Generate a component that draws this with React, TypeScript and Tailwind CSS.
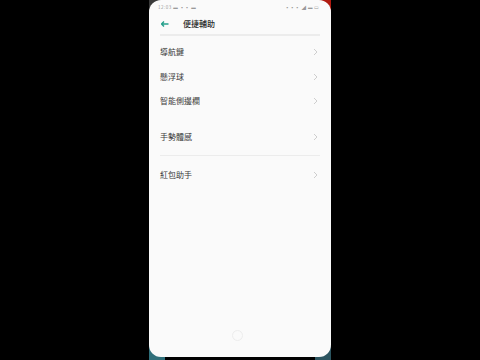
import React from 'react';

const font = { fontFamily: '"Noto Sans CJK TC", "Noto Sans CJK SC", sans-serif' };

function Chevron() {
  return (
    <svg width="5" height="8" viewBox="0 0 5 8" className="shrink-0">
      <path d="M1 1 L4 4 L1 7" fill="none" stroke="#c8c8c8" strokeWidth="0.9" />
    </svg>
  );
}

function Row({ label }: { label: string }) {
  return (
    <div className="h-[24.5px] flex items-center justify-between pl-[11px] pr-[13px]">
      <span className="text-[8px] leading-none text-[#3a3a3a]">{label}</span>
      <Chevron />
    </div>
  );
}

export default function App() {
  return (
    <div className="w-[480px] h-[360px] bg-black flex justify-center overflow-hidden" style={font}>
      <div className="relative w-[182px] h-[360px]">
        {/* wallpaper peeking behind the rounded corners */}
        <div className="absolute left-0 top-0 w-[14px] h-[14px] bg-[#3a3a3a]" />
        <div className="absolute right-0 top-0 w-[14px] h-[16px] bg-[#b01a10]" />
        <div className="absolute left-0 bottom-0 w-[16px] h-[14px] bg-[#2f6f7a]" />
        <div className="absolute right-0 bottom-0 w-[16px] h-[14px] bg-[#2c5560]" />

        <div className="relative h-[357px] bg-[#fafafa] rounded-[12px] flex flex-col">
          {/* status bar */}
          <div className="h-[13px] flex items-center justify-between px-[9px] pt-[1px]">
            <span className="text-[4.5px] leading-none text-[#9a9a9a] tracking-[0.5px]">12:03 ▬ ▪▪ ▬</span>
            <span className="text-[4.5px] leading-none text-[#9a9a9a] tracking-[0.5px] mr-[2px]">▪▪▪ ◢ ▬ ▭</span>
          </div>

          {/* header */}
          <div className="h-[21px] flex items-center pl-[12px]">
            <svg width="8" height="6" viewBox="0 0 8 6">
              <path d="M0.5 3 L7.5 3 M3 0.6 L0.6 3 L3 5.4" fill="none" stroke="#26a08c" strokeWidth="1.4" />
            </svg>
            <span className="ml-[14px] text-[8px] leading-none text-[#2a2a2a] font-medium">便捷輔助</span>
          </div>
          <div className="mx-[11px] h-[2px] bg-[#ececec]" />

          <div className="pt-[4px]">
            <Row label="導航鍵" />
            <Row label="懸浮球" />
            <Row label="智能側邊欄" />
          </div>
          <div className="mt-[11px]">
            <Row label="手勢體感" />
          </div>
          <div className="mt-[6px] mx-[11px] h-[1px] bg-[#ececec]" />
          <div className="mt-[7px]">
            <Row label="紅包助手" />
          </div>

          <div className="flex-1" />
          <div className="flex justify-center pb-[16px] pr-[6px]">
            <div className="w-[11px] h-[11px] rounded-full border-[1.5px] border-[#ededed]" />
          </div>
        </div>
      </div>
    </div>
  );
}
